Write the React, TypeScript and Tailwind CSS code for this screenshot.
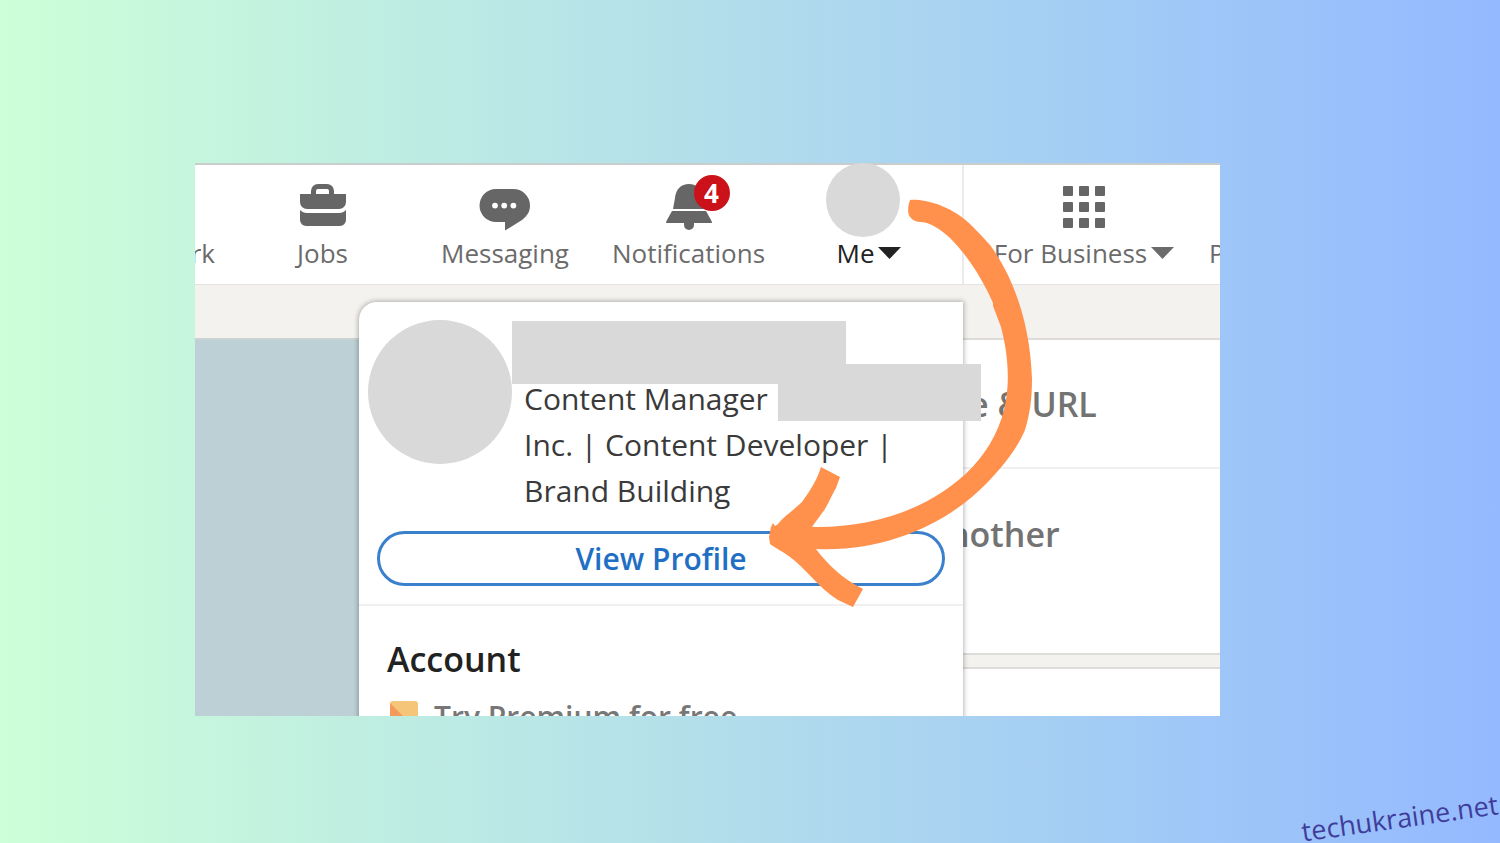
import React from "react";

function Caret() {
  return (
    <svg width="23" height="12" viewBox="0 0 23 12" fill="currentColor" aria-hidden="true">
      <path d="M0 0H23L11.500 12Z" />
    </svg>
  );
}

function NavItem({
  icon,
  label,
  className,
}: {
  icon?: React.ReactNode;
  label: React.ReactNode;
  className?: string;
}) {
  return (
    <a
      href="#"
      className={`flex h-full shrink-0 flex-col whitespace-nowrap text-[26px] leading-8 ${className ?? ""}`}
    >
      <span className="flex h-[72px] w-full items-center justify-center pt-[11px]">{icon}</span>
      <span className="flex items-center gap-1">{label}</span>
    </a>
  );
}

function JobsIcon() {
  return (
    <svg width="48" height="46" viewBox="0 0 48 46" fill="#666" aria-hidden="true">
      <path
        fillRule="evenodd"
        d="M12 10V7a7 7 0 0 1 7-7h9a7 7 0 0 1 7 7v3H47V18a7 7 0 0 1-7 7H8a7 7 0 0 1-7-7V10ZM17 10H30V7a2 2 0 0 0-2-2H19a2 2 0 0 0-2 2Z"
      />
      <path d="M1 26c2 2 4 3 7 3h32c3 0 5-1 7-3v10a6 6 0 0 1-6 6H7a6 6 0 0 1-6-6Z" />
    </svg>
  );
}

function MessagingIcon() {
  return (
    <svg width="52" height="48" viewBox="0 -6 52 48" fill="#666" aria-hidden="true">
      <path
        fillRule="evenodd"
        d="M17 0H34a16.500 16.500 0 0 1 17 16.500C51 23 48 27 43 31L26 41.500V33H17A16.500 16.500 0 0 1 17 0ZM16 13.700a2.900 2.900 0 1 0 0 5.800 2.900 2.900 0 0 0 0-5.800ZM25.200 13.700a2.900 2.900 0 1 0 0 5.800 2.900 2.900 0 0 0 0-5.800ZM34.400 13.700a2.900 2.900 0 1 0 0 5.800 2.900 2.900 0 0 0 0-5.800Z"
      />
    </svg>
  );
}

function BellIcon() {
  return (
    <span className="relative">
      <svg width="48" height="48" viewBox="0 0 48 48" fill="#666" aria-hidden="true">
        <path d="M8 26L10 15C11 6 16 1 24 1s13 5 14 14l2 11Z" />
        <path d="M7 28H41l5 9c1 2 1 3 1 3H1s0-1 1-3Z" />
        <path d="M19 39H29v3a5 5 0 0 1-10 0Z" />
      </svg>
      <span className="absolute -top-2 left-[29px] flex size-9 items-center justify-center rounded-full bg-[#cb1119] text-[26px] font-bold leading-8 text-white">
        4
      </span>
    </span>
  );
}

function GridIcon() {
  return (
    <span className="grid grid-cols-3 gap-[6px]">
      {[0, 1, 2, 3, 4, 5, 6, 7, 8].map((n) => (
        <span key={n} className="size-[10px] rounded-[1px] bg-[#666]" />
      ))}
    </span>
  );
}

function TopNav() {
  return (
    <nav className="flex h-[122px] overflow-hidden border-b border-t-2 border-b-[#e4e3e1] border-t-[#c9cdcb] bg-white text-[#6b6b6b]">
      <NavItem label="rk" className="mr-[17px] w-5 items-end" />
      <NavItem icon={<JobsIcon />} label="Jobs" className="w-[181px] items-center" />
      <NavItem icon={<MessagingIcon />} label="Messaging" className="w-[184px] items-center" />
      <NavItem icon={<BellIcon />} label="Notifications" className="w-[183px] items-center" />
      <NavItem
        label={
          <>
            Me <Caret />
          </>
        }
        className="w-[184px] items-center border-r-2 border-[#ebebeb] pr-1 text-[#222]"
      />
      <NavItem
        icon={<GridIcon />}
        label={
          <>
            For Business <Caret />
          </>
        }
        className="w-[240px] items-center"
      />
      <NavItem label="P" className="pl-[5px]" />
    </nav>
  );
}

function ProfileMenu() {
  return (
    <section className="absolute left-[164px] top-[139px] h-[440px] w-[604px] rounded-tl-[18px] bg-white shadow-[0_0_5px_1px_rgba(0,0,0,0.28)]">
      <div className="flex gap-3 pl-[9px] pt-[18px]">
        <div className="size-36 rounded-full bg-[#d9d9d9]" />
        <p className="pt-14 text-[30px] leading-[46px] text-[#3a3a3a]">
          Content Manager
          <br />
          Inc. | Content Developer |
          <br />
          Brand Building
        </p>
      </div>
      <div className="border-b-2 border-[#f0f0f0] px-[18px] pb-[18px] pt-[17px]">
        <button className="h-[55px] w-full rounded-full border-[3px] border-[#3a80cc] text-[30px] font-semibold leading-8 text-[#1f6fc4]">
          View Profile
        </button>
      </div>
      <h2 className="pl-7 pt-[30px] text-[34px] font-semibold leading-[46px] text-[#222]">Account</h2>
      <a href="#" className="flex gap-4 pl-[31px] pt-[19px] text-[30px] font-semibold leading-8 text-[#777]">
        <svg width="28" height="28" viewBox="0 0 28 28" aria-hidden="true">
          <rect width="28" height="28" rx="3" fill="#f5c67a" />
          <path d="M0 2L26 28H0Z" fill="#f39a5c" />
        </svg>
        Try Premium for free
      </a>
      <div className="absolute left-[153px] top-[19px] h-[63px] w-[334px] bg-[#d9d9d9]" />
      <div className="absolute left-[419px] top-[62px] h-[57px] w-[203px] bg-[#d9d9d9]" />
    </section>
  );
}

function Arrow() {
  return (
    <svg
      className="absolute left-[573px] top-[36px]"
      width="266"
      height="410"
      viewBox="768 199 266 410"
      fill="#ff914d"
      aria-hidden="true"
    >
      <path d="M910 200C921 199 943 203 963 218C973 226 980 234 990 245C1012 275 1030 320 1032 379C1032 398 1030 414 1025 430C1018 446 1008 461 987 483C950 521 890 552 816 549C828 565 843 579 863 589L853 607L838 600C820 589 805 568 790 557C784 552 775 548 770 544L769 537L771 527L773 523L775 526L778 524C784 516 794 510 802 502C810 491 817 480 821 467L840 477L836 488C832 494 828 506 822 513C819 518 815 522 812 527C905 529 993 480 1006 400C1010 375 1007 350 1001 327L993 306V303C982 278 967 255 950 238C940 229 930 222 920 222C915 222 912 219 910 217C907 213 908 205 910 200Z" />
    </svg>
  );
}

export default function App() {
  return (
    <div className="relative min-h-screen overflow-hidden bg-linear-to-r/srgb from-[#cdffd8] to-[#94b9ff] pb-[127px] pl-[195px] pr-[280px] pt-[163px] font-['Open_Sans','Noto_Sans',sans-serif]">
      <main className="relative h-[553px]">
        <div className="relative h-full overflow-hidden bg-[#f3f2ef]">
          <TopNav />
          <div className="flex pt-[53px]">
            <div className="h-[380px] w-[300px] shrink-0 border-t-2 border-[#c9d3d4] bg-[#bdd0d5]" />
            <div className="ml-[120px] flex flex-1 flex-col gap-3 text-[34px] font-semibold leading-[46px] text-[#737373]">
              <div className="border-y-2 border-[#dddcda] bg-white">
                <p className="border-b-2 border-[#f0f0f0] pb-10 pl-[354px] pt-[41px]">e &amp; URL</p>
                <p className="pb-24 pl-[333px] pt-[42px]">nother</p>
              </div>
              <div className="h-20 border-t-2 border-[#dddcda] bg-white" />
            </div>
          </div>
          <ProfileMenu />
        </div>
        <div className="absolute left-[631px] top-0 size-[74px] rounded-full bg-[#d9d9d9]" />
        <Arrow />
      </main>
      <div className="absolute bottom-[23px] right-0 origin-bottom-right -rotate-[8deg] text-[27px] leading-8 text-[#3f3d99]">
        techukraine.net
      </div>
    </div>
  );
}
